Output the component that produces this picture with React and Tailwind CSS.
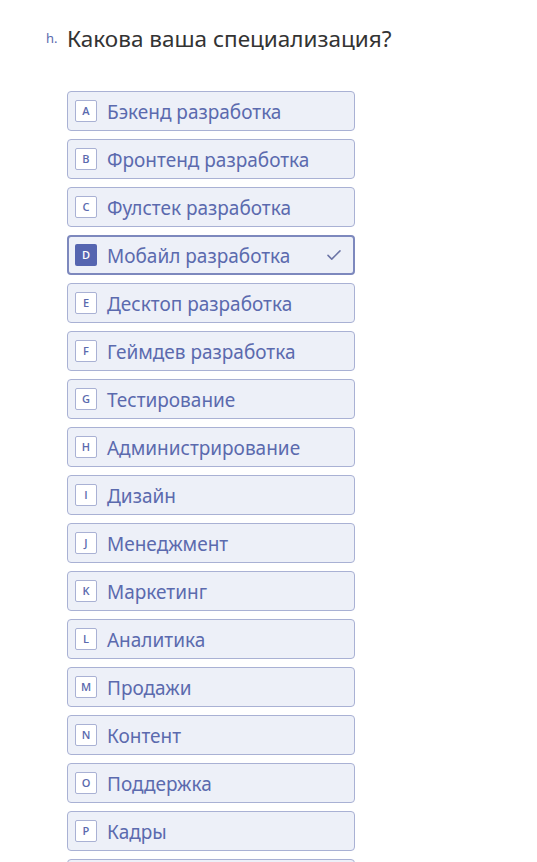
import React, { useState } from 'react';

const options = [
  { key: 'A', label: 'Бэкенд разработка' },
  { key: 'B', label: 'Фронтенд разработка' },
  { key: 'C', label: 'Фулстек разработка' },
  { key: 'D', label: 'Мобайл разработка' },
  { key: 'E', label: 'Десктоп разработка' },
  { key: 'F', label: 'Геймдев разработка' },
  { key: 'G', label: 'Тестирование' },
  { key: 'H', label: 'Администрирование' },
  { key: 'I', label: 'Дизайн' },
  { key: 'J', label: 'Менеджмент' },
  { key: 'K', label: 'Маркетинг' },
  { key: 'L', label: 'Аналитика' },
  { key: 'M', label: 'Продажи' },
  { key: 'N', label: 'Контент' },
  { key: 'O', label: 'Поддержка' },
  { key: 'P', label: 'Кадры' },
  { key: 'Q', label: 'Другое' },
];

export default function App() {
  const [selected, setSelected] = useState('D');

  return (
    <div className="min-h-screen bg-white overflow-hidden" style={{ fontFamily: '"Noto Sans", "Open Sans", sans-serif' }}>
      <div className="pl-[46px] pt-[23px]">
        {/* Question */}
        <div className="flex items-start">
          <span className="w-[21px] text-[13px] leading-[24px] pt-[3px] text-[#5b6aae]">h.</span>
          <h1 className="text-[22.5px] leading-[32px] text-[#333333]">Какова ваша специализация?</h1>
        </div>

        {/* Choices */}
        <div className="mt-[36px] pl-[21px] flex flex-col gap-[8px] w-[309px]">
          {options.map((o) => {
            const active = o.key === selected;
            return (
              <button
                key={o.key}
                onClick={() => setSelected(o.key)}
                className={
                  active
                    ? 'h-[40px] w-full flex items-center rounded-[4px] bg-[#edf0f8] border-2 border-[#7d88bd] pl-[6px] pr-[10px] text-left'
                    : 'h-[40px] w-full flex items-center rounded-[4px] bg-[#edf0f8] border border-[#a9b1d4] pl-[7px] pr-[11px] text-left'
                }
              >
                <span
                  style={{ fontFamily: '"Open Sans", sans-serif' }}
                  className={
                    active
                      ? 'w-[22px] h-[22px] shrink-0 flex items-center justify-center rounded-[2px] bg-[#5565b0] text-white text-[11px] font-semibold'
                      : 'w-[22px] h-[22px] shrink-0 flex items-center justify-center rounded-[2px] bg-white border border-[#a9b1d4] text-[#5b6aae] text-[11px] font-semibold'
                  }
                >
                  {o.key}
                </span>
                <span className="ml-[10px] pt-[3px] flex-1 text-[19px] text-[#5b6aae] leading-none">{o.label}</span>
                {active && (
                  <svg width="18" height="18" viewBox="0 0 24 24" fill="none" stroke="#6b74a6" strokeWidth="2" strokeLinecap="round" strokeLinejoin="round">
                    <path d="M4 12.5l5 5L20 6.5" />
                  </svg>
                )}
              </button>
            );
          })}
        </div>
      </div>
    </div>
  );
}
